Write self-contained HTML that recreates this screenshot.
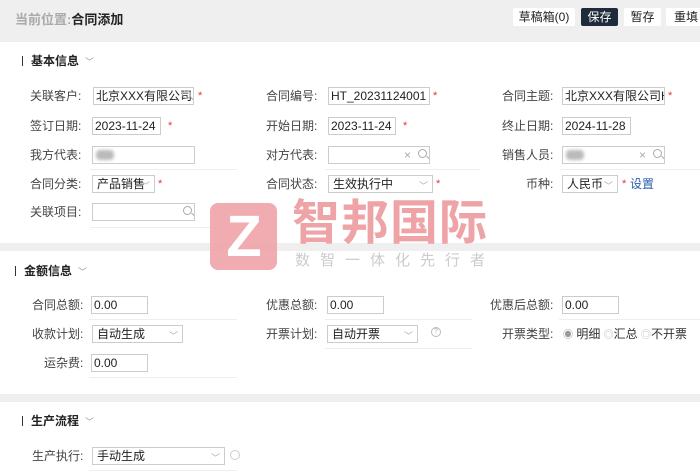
<!DOCTYPE html>
<html><head><meta charset="utf-8"><style>
*{margin:0;padding:0;box-sizing:border-box}
body{width:700px;height:473px;overflow:hidden;background:#fff;font-family:"Liberation Sans","Noto Sans CJK SC",sans-serif;font-size:12px;color:#333;position:relative}
.a{position:absolute;white-space:nowrap}
.hdr{left:0;top:0;width:700px;height:42px;background:#efefef}
.band{left:0;width:700px;height:8px;background:#efefef}
.btn{top:8px;height:18px;background:#fff;border-radius:2px;font-size:12px;line-height:18px;text-align:center;color:#222}
.lbl{font-size:12px;color:#444;line-height:18px;text-align:right}
.in{height:18px;border:1px solid #ccc;background:#fff;font-size:12px;line-height:16px;padding-left:2px;overflow:hidden;color:#222}
.st{color:#e33;font-size:11px;line-height:18px}
.ttl{font-size:12px;font-weight:bold;color:#222;line-height:16px}
.ttl:before{content:"";display:inline-block;width:1px;height:10px;background:#333;margin-right:8px;vertical-align:-1px}
.ch{color:#999;font-size:9px;font-weight:normal;margin-left:6px}
.ln{height:1px;background:#eee}
.mg{position:absolute;top:2px;width:9px;height:9px;border:1px solid #aaa;border-radius:50%}
.mg:after{content:"";position:absolute;left:7px;top:7px;width:4px;height:1px;background:#aaa;transform:rotate(45deg)}
.dd{position:absolute;right:4px;top:2px;color:#aaa;font-size:9px}
.blur{position:absolute;left:3px;top:3px;width:18px;height:10px;background:#bbb;border-radius:4px;filter:blur(1.5px)}
</style></head><body>
<div class="a hdr"></div>
<div class="a" style="left:15px;top:11px;font-size:13px;line-height:18px;font-weight:bold;color:#aaa">当前位置:<span style="color:#222">合同添加</span></div>
<div class="a btn" style="left:513px;width:62px">草稿箱(0)</div>
<div class="a btn" style="left:581px;width:37px;background:#1f2b3a;color:#fff">保存</div>
<div class="a btn" style="left:624px;width:37px">暂存</div>
<div class="a btn" style="left:666px;width:40px">重填</div>

<div class="a ttl" style="left:22px;top:53px">基本信息<span class="ch">﹀</span></div>

<div class="a lbl" style="left:30px;top:87px">关联客户:</div>
<div class="a in" style="left:93px;top:87px;width:101px">北京XXX有限公司<span class="mg" style="left:88px"></span></div>
<div class="a st" style="left:198px;top:87px">*</div>
<div class="a lbl" style="left:266px;top:87px">合同编号:</div>
<div class="a in" style="left:328px;top:87px;width:102px">HT_20231124001</div>
<div class="a st" style="left:433px;top:87px">*</div>
<div class="a lbl" style="left:502px;top:87px">合同主题:</div>
<div class="a in" style="left:562px;top:87px;width:103px">北京XXX有限公司HT</div>
<div class="a st" style="left:668px;top:87px">*</div>

<div class="a lbl" style="left:30px;top:117px">签订日期:</div>
<div class="a in" style="left:92px;top:117px;width:69px">2023-11-24</div>
<div class="a st" style="left:168px;top:117px">*</div>
<div class="a lbl" style="left:266px;top:117px">开始日期:</div>
<div class="a in" style="left:328px;top:117px;width:68px">2023-11-24</div>
<div class="a st" style="left:403px;top:117px">*</div>
<div class="a lbl" style="left:502px;top:117px">终止日期:</div>
<div class="a in" style="left:562px;top:117px;width:69px">2024-11-28</div>

<div class="a lbl" style="left:30px;top:146px">我方代表:</div>
<div class="a in" style="left:92px;top:146px;width:103px"><span class="blur"></span></div>
<div class="a lbl" style="left:266px;top:146px">对方代表:</div>
<div class="a in" style="left:328px;top:146px;width:102px"><span style="position:absolute;left:75px;top:0;color:#aaa">×</span><span class="mg" style="left:89px"></span></div>
<div class="a lbl" style="left:502px;top:146px">销售人员:</div>
<div class="a in" style="left:562px;top:146px;width:103px"><span class="blur"></span><span style="position:absolute;left:76px;top:0;color:#aaa">×</span><span class="mg" style="left:90px"></span></div>
<div class="a ln" style="left:90px;top:169px;width:147px"></div>
<div class="a ln" style="left:325px;top:169px;width:155px"></div>
<div class="a ln" style="left:560px;top:169px;width:140px"></div>

<div class="a lbl" style="left:30px;top:175px">合同分类:</div>
<div class="a in" style="left:92px;top:175px;width:63px;padding-left:4px">产品销售<span class="dd">﹀</span></div>
<div class="a st" style="left:158px;top:175px">*</div>
<div class="a lbl" style="left:266px;top:175px">合同状态:</div>
<div class="a in" style="left:328px;top:175px;width:105px;padding-left:4px">生效执行中<span class="dd">﹀</span></div>
<div class="a st" style="left:436px;top:175px">*</div>
<div class="a lbl" style="left:526px;top:175px">币种:</div>
<div class="a in" style="left:562px;top:175px;width:56px;padding-left:4px">人民币<span class="dd">﹀</span></div>
<div class="a st" style="left:622px;top:175px">*</div>
<div class="a" style="left:630px;top:175px;line-height:18px;color:#2a5db0">设置</div>

<div class="a lbl" style="left:30px;top:203px">关联项目:</div>
<div class="a in" style="left:92px;top:203px;width:103px"><span class="mg" style="left:90px"></span></div>
<div class="a ln" style="left:90px;top:227px;width:147px"></div>

<div class="a band" style="top:243px"></div>

<div class="a" style="left:210px;top:203px;width:67px;height:67px;background:#eea3a7;border-radius:8px;opacity:.9"></div>
<div class="a" style="left:220px;top:207px;width:48px;height:60px;color:#fff;font-size:58px;font-weight:bold;line-height:60px;text-align:center">Z</div>
<div class="a" style="left:292px;top:198px;font-size:48px;line-height:52px;font-weight:bold;color:#eea3a7;letter-spacing:1px">智邦国际</div>
<div class="a" style="left:295px;top:252px;font-size:15px;line-height:18px;color:#ccc;letter-spacing:10px">数智一体化先行者</div>

<div class="a ttl" style="left:15px;top:263px">金额信息<span class="ch">﹀</span></div>
<div class="a lbl" style="left:32px;top:296px">合同总额:</div>
<div class="a in" style="left:91px;top:296px;width:57px">0.00</div>
<div class="a lbl" style="left:266px;top:296px">优惠总额:</div>
<div class="a in" style="left:327px;top:296px;width:57px">0.00</div>
<div class="a lbl" style="left:490px;top:296px">优惠后总额:</div>
<div class="a in" style="left:562px;top:296px;width:57px">0.00</div>
<div class="a ln" style="left:89px;top:319px;width:148px"></div>
<div class="a ln" style="left:325px;top:319px;width:147px"></div>
<div class="a ln" style="left:559px;top:319px;width:141px"></div>
<div class="a lbl" style="left:32px;top:325px">收款计划:</div>
<div class="a in" style="left:92px;top:325px;width:91px;padding-left:4px">自动生成<span class="dd">﹀</span></div>
<div class="a lbl" style="left:266px;top:325px">开票计划:</div>
<div class="a in" style="left:327px;top:325px;width:91px;padding-left:4px">自动开票<span class="dd">﹀</span></div>
<div class="a" style="left:431px;top:327px;width:10px;height:10px;border:1px solid #bbb;border-radius:50%;font-size:7px;line-height:8px;text-align:center;color:#aaa">?</div>
<div class="a lbl" style="left:502px;top:325px">开票类型:</div>
<div class="a" style="left:563px;top:325px;line-height:18px;color:#333"><span style="color:#999;font-size:10px">◉</span> 明细 <span style="color:#bbb;font-size:10px">◎</span>汇总 <span style="color:#bbb;font-size:10px">◎</span>不开票</div>
<div class="a ln" style="left:325px;top:348px;width:147px"></div>
<div class="a lbl" style="left:44px;top:354px">运杂费:</div>
<div class="a in" style="left:91px;top:354px;width:57px">0.00</div>
<div class="a ln" style="left:89px;top:377px;width:148px"></div>

<div class="a band" style="top:394px"></div>

<div class="a ttl" style="left:22px;top:413px">生产流程<span class="ch">﹀</span></div>
<div class="a lbl" style="left:32px;top:447px">生产执行:</div>
<div class="a in" style="left:92px;top:447px;width:133px;padding-left:4px">手动生成<span class="dd">﹀</span></div>
<div class="a" style="left:230px;top:450px;width:10px;height:10px;border:1px solid #ccc;border-radius:50%"></div>
<div class="a ln" style="left:89px;top:470px;width:148px"></div>
</body></html>
